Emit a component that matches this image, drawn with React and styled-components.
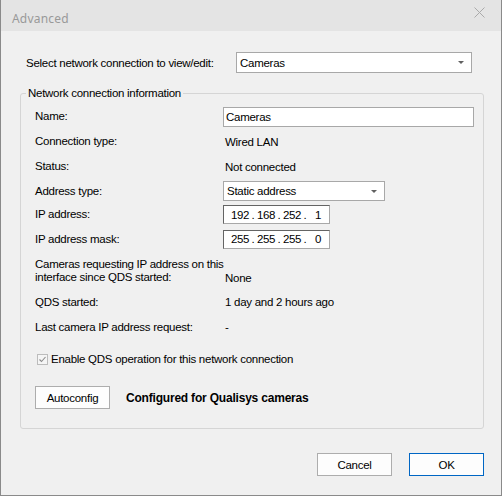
import React from 'react'
import styled, { createGlobalStyle } from 'styled-components'

const GlobalStyle = createGlobalStyle`
  html, body {
    margin: 0;
    padding: 0;
    background: #f0f0f0;
  }
  body {
    font-family: "Liberation Sans", Arial, sans-serif;
    font-size: 11.5px;
    color: #000;
  }
`

const Window = styled.div`
  box-sizing: border-box;
  width: 502px;
  height: 496px;
  background: #f0f0f0;
  border: 1px solid #8a8a8a;
  border-top: none;
  display: flex;
  flex-direction: column;
`

const TitleBar = styled.div`
  box-sizing: border-box;
  height: 31px;
  flex: none;
  background: #e4e4e4;
  display: flex;
  align-items: center;
  justify-content: space-between;
  padding: 5px 16px 0 11px;
  color: #999;
  font-family: "Noto Sans", "Open Sans", sans-serif;
  font-size: 12px;
  letter-spacing: 0.2px;

  svg {
    align-self: flex-start;
    margin-top: 2px;
  }
`

const Content = styled.div`
  flex: 1;
  display: flex;
  flex-direction: column;
  padding: 21px 17px 0 19px;
  letter-spacing: -0.27px;
`

const TopRow = styled.div`
  display: flex;
  align-items: center;
  height: 21px;
  padding-left: 6px;
`

const TopLabel = styled.span`
  width: 210px;
`

const Combo = styled.div`
  box-sizing: border-box;
  width: ${p => p.$w}px;
  height: ${p => p.$h}px;
  background: #fff;
  border: 1px solid #a8a8a8;
  display: flex;
  align-items: center;
  justify-content: space-between;
  padding: 0 7px 0 3px;
`

const Arrow = styled.span`
  width: 0;
  height: 0;
  border-left: 3px solid transparent;
  border-right: 3px solid transparent;
  border-top: 3px solid #606060;
`

const Group = styled.fieldset`
  box-sizing: border-box;
  margin: 14px 0 0 0;
  padding: 5px 0 0 14px;
  height: 342px;
  border: 1px solid #d5d5d5;
  border-radius: 3px;
  min-width: 0;
`

const Legend = styled.legend`
  padding: 0 2px;
  margin-left: -9px;
`

const Row = styled.div`
  display: flex;
  align-items: ${p => (p.$end ? 'flex-end' : 'center')};
  height: ${p => p.$h}px;
  padding-bottom: ${p => (p.$end ? '6px' : '0')};
  box-sizing: border-box;
`

const Label = styled.div`
  width: 188px;
  flex: none;
  line-height: 13px;
  white-space: nowrap;
`

const Value = styled.div`
  padding-left: 2px;
`

const TextBox = styled.div`
  box-sizing: border-box;
  width: 251px;
  height: 20px;
  background: #fff;
  border: 1px solid #a8a8a8;
  display: flex;
  align-items: center;
  padding-left: 2px;
`

const IpBox = styled.div`
  box-sizing: border-box;
  width: 107px;
  height: 19px;
  background: #fff;
  border: 1px solid #a8a8a8;
  border-top-color: #646464;
  border-left-color: #646464;
  display: flex;
  align-items: center;
  padding-left: 7px;
  font-size: 11.5px;
  letter-spacing: -0.4px;
`

const Octet = styled.span`
  width: 18px;
  text-align: center;
`

const Dot = styled.span`
  width: 8px;
  text-align: center;
`

const CheckRow = styled.label`
  display: flex;
  align-items: center;
  gap: 3px;
  height: 26px;
  margin-top: 6px;
  padding-left: 2px;
`

const ActionRow = styled.div`
  display: flex;
  align-items: center;
  gap: 16px;
  margin-top: 14px;
`

const Button = styled.button`
  box-sizing: border-box;
  width: ${p => p.$w}px;
  height: 23px;
  background: #fdfdfd;
  border: 1px solid ${p => (p.$primary ? '#0066c4' : '#adadad')};
  font-family: "Liberation Sans", Arial, sans-serif;
  font-size: 11.5px;
  color: #000;
  padding: 0;
  letter-spacing: -0.27px;
`

const Status = styled.span`
  font-size: 12px;
  font-weight: bold;
  letter-spacing: -0.2px;
`

const Footer = styled.div`
  display: flex;
  justify-content: flex-end;
  gap: 17px;
  padding: 24px 0 0 0;
`

function CloseIcon() {
  return (
    <svg width="11" height="11" viewBox="0 0 11 11">
      <path d="M0.5 0.5 L10.5 10.5 M10.5 0.5 L0.5 10.5" stroke="#aaa" strokeWidth="1" />
    </svg>
  )
}

function CheckBox() {
  return (
    <svg width="11" height="11" viewBox="0 0 11 11">
      <rect x="0.5" y="0.5" width="10" height="10" fill="#f5f5f5" stroke="#bcbcbc" />
      <path d="M2.5 5.5 L4.5 7.5 L8.5 3" fill="none" stroke="#8c8c8c" strokeWidth="1.1" />
    </svg>
  )
}

function IpField({ parts }) {
  return (
    <IpBox>
      {parts.map((p, i) => (
        <React.Fragment key={i}>
          {i > 0 && <Dot>.</Dot>}
          <Octet>{p}</Octet>
        </React.Fragment>
      ))}
    </IpBox>
  )
}

export default function App() {
  return (
    <Window>
      <GlobalStyle />
      <TitleBar>
        <span>Advanced</span>
        <CloseIcon />
      </TitleBar>
      <Content>
        <TopRow>
          <TopLabel>Select network connection to view/edit:</TopLabel>
          <Combo $w={236} $h={21}>
            <span>Cameras</span>
            <Arrow />
          </Combo>
        </TopRow>

        <Group>
          <Legend>Network connection information</Legend>
          <Row $h={25}>
            <Label>Name:</Label>
            <TextBox>Cameras</TextBox>
          </Row>
          <Row $h={25}>
            <Label>Connection type:</Label>
            <Value>Wired LAN</Value>
          </Row>
          <Row $h={25}>
            <Label>Status:</Label>
            <Value>Not connected</Value>
          </Row>
          <Row $h={24}>
            <Label>Address type:</Label>
            <Combo $w={162} $h={20}>
              <span>Static address</span>
              <Arrow />
            </Combo>
          </Row>
          <Row $h={23}>
            <Label>IP address:</Label>
            <IpField parts={['192', '168', '252', '1']} />
          </Row>
          <Row $h={26}>
            <Label>IP address mask:</Label>
            <IpField parts={['255', '255', '255', '0']} />
          </Row>
          <Row $h={38} $end>
            <Label>
              Cameras requesting IP address on this
              <br />
              interface since QDS started:
            </Label>
            <Value>None</Value>
          </Row>
          <Row $h={24}>
            <Label>QDS started:</Label>
            <Value>1 day and 2 hours ago</Value>
          </Row>
          <Row $h={26}>
            <Label>Last camera IP address request:</Label>
            <Value>-</Value>
          </Row>
          <CheckRow>
            <CheckBox />
            Enable QDS operation for this network connection
          </CheckRow>
          <ActionRow>
            <Button $w={75}>Autoconfig</Button>
            <Status>Configured for Qualisys cameras</Status>
          </ActionRow>
        </Group>

        <Footer>
          <Button $w={75}>Cancel</Button>
          <Button $w={75} $primary>OK</Button>
        </Footer>
      </Content>
    </Window>
  )
}
